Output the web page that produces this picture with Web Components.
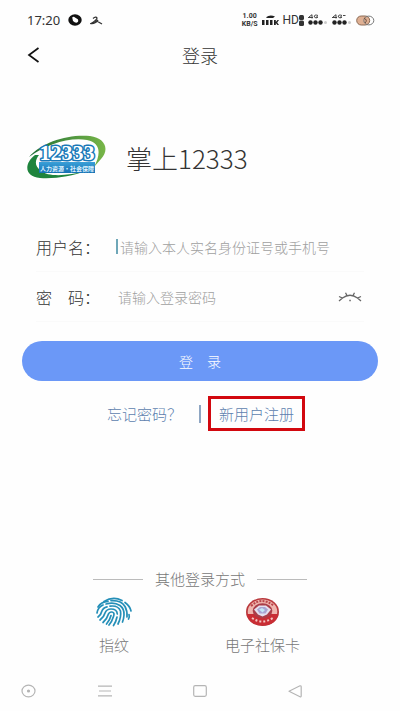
<!DOCTYPE html>
<html lang="zh-CN">
<head>
<meta charset="utf-8">
<meta name="viewport" content="width=device-width, initial-scale=1">
<title>登录</title>
<style>
  body {
    margin: 0;
    background: #fefefe;
    color: #333;
    font-family: "Noto Sans CJK SC", sans-serif;
    font-weight: 300;
  }
</style>
</head>
<body>
<login-page></login-page>

<script>
// Small helper shared by all components
class BaseElement extends HTMLElement {
  constructor() {
    super();
    this.attachShadow({ mode: 'open' });
    this.shadowRoot.innerHTML = this.template();
  }
}

// Phone status bar: clock, notifications, network and battery
class StatusBar extends BaseElement {
  template() {
    return `
      <style>
        :host {
          display: flex;
          align-items: center;
          justify-content: space-between;
          height: 40px;
          padding: 0 25px 0 27px;
          font-family: "Noto Sans", sans-serif;
          font-size: 13px;
          font-weight: 400;
        }
        .group { display: flex; align-items: center; gap: 8px; }
        .network { gap: 4px; }
        .speed {
          display: grid;
          justify-items: center;
          font-family: Roboto, sans-serif;
          font-size: 7px;
          font-weight: 700;
          line-height: 8px;
        }
        .hd { display: flex; align-items: center; font-family: Roboto, sans-serif; font-size: 12px; }
        svg { display: block; }
      </style>
      <div class="group">
        <span>17:20</span>
        <svg width="14" height="12" viewBox="0 0 14 12">
          <ellipse cx="7" cy="6" rx="6.7" ry="5.8" fill="#111"/>
          <path d="M4.2 3.6Q5.5 2.2 7 3.4L9.8 5.3Q11 7.5 9 8.6Q7 9 5 7Z" fill="#fff"/>
        </svg>
        <svg width="13" height="9" viewBox="0 0 13 9" fill="none" stroke="#333" stroke-width="1.3">
          <path d="M3 2.5Q6 0 7 2Q7 4 1 7.5Q5 8 8 4M5 4L12 8"/>
        </svg>
      </div>
      <div class="group network">
        <div class="speed"><span>1.00</span><span>KB/S</span></div>
        <svg width="17" height="11" viewBox="0 0 17 11" fill="#222">
          <path d="M4 2.2Q8 -1 13 1.5L11 3H5ZM0 5h2.5v5H0zM4 5h2.5v5H4zM8 5h2.5v5H8zM12 5h1.8v2L15.5 5H17L15.2 7.4L17 10h-1.6L13.8 8v2H12z"/>
        </svg>
        <span class="hd">HD<svg width="5" height="11" viewBox="0 0 5 11"><rect width="5" height="5" rx="1.5" fill="#333"/><rect y="5.5" width="5" height="5.5" rx="1.5" fill="#333"/></svg></span>
        <svg width="20" height="12" viewBox="0 0 20 12" fill="#222">
          <path d="M1 3L4 .7V4.5M0 3.5H5M10 1.5Q6 0 6.3 3Q8 5 10 3H8" fill="none" stroke="#333" stroke-width=".9"/>
          <circle cx="2.5" cy="8.5" r="2.2"/><circle cx="7.5" cy="8.5" r="2.2"/><circle cx="12.5" cy="8.5" r="2.2"/>
          <circle cx="17.5" cy="8.5" r="1.5" fill="#ccc"/>
        </svg>
        <svg width="20" height="12" viewBox="0 0 20 12" fill="#222">
          <path d="M1 3L4 .7V4.5M0 3.5H5M10 1.5Q6 0 6.3 3Q8 5 10 3H8M11 1.5h2.5" fill="none" stroke="#333" stroke-width=".9"/>
          <circle cx="2.5" cy="8.5" r="2.2"/><circle cx="7.5" cy="8.5" r="2.2"/><circle cx="12.5" cy="8.5" r="2.2"/>
          <circle cx="17.5" cy="8.5" r="1.5" fill="#ccc"/>
        </svg>
        <svg width="19" height="11" viewBox="0 0 19 11">
          <rect x=".7" y="1" width="13" height="9" rx="4.5" fill="#dfb093" stroke="#8a6a55"/>
          <ellipse cx="12.8" cy="5.5" rx="5" ry="4.4" fill="none" stroke="#777"/>
          <path d="M8 3Q12 5 9 8" fill="none" stroke="#6b4b39"/>
        </svg>
      </div>
    `;
  }
}

// Title bar with a back button
class PageHeader extends BaseElement {
  template() {
    return `
      <style>
        :host {
          display: grid;
          grid-template-columns: 1fr auto 1fr;
          align-items: center;
          height: 30px;
          padding: 0 24px;
        }
        button {
          justify-self: start;
          padding: 0 3px;
          border: 0;
          background: none;
          cursor: pointer;
        }
        svg { display: block; }
        h1 { margin: 0; font-size: 18px; font-weight: 300; line-height: 24px; }
      </style>
      <button type="button" aria-label="返回">
        <svg width="13" height="16" viewBox="0 0 13 16" fill="none" stroke="#111" stroke-width="1.7">
          <path d="M11.5 1L2 8L11.5 15"/>
        </svg>
      </button>
      <h1><slot></slot></h1>
    `;
  }
}

// 12333 logo and product name
class BrandMark extends BaseElement {
  template() {
    return `
      <style>
        :host {
          display: flex;
          align-items: center;
          gap: 20px;
          padding: 64px 26px 0;
        }
        svg { display: block; flex: none; }
        .name { font-size: 26px; line-height: 32px; }
      </style>
      <svg width="80" height="48" viewBox="0 0 80 48" role="img" aria-label="12333">
        <defs>
          <linearGradient id="leaf" x1="0" x2="1" y1="0" y2="0">
            <stop offset="0" stop-color="#1c6d35"/>
            <stop offset="1" stop-color="#78b648"/>
          </linearGradient>
          <linearGradient id="plate" x1="0" x2="0" y1="0" y2="1">
            <stop offset="0" stop-color="#3aa0d8"/>
            <stop offset="1" stop-color="#1670b4"/>
          </linearGradient>
        </defs>
        <path d="M3 23C16 8 42 0 64 2C79 4 84 15 75 25L68 33C75 20 75 9 61 6C42 3 20 11 3 23Z" fill="url(#leaf)"/>
        <path d="M9 21C-2 29 -2 43 14 44C30 45 46 42 60 37C42 42 22 43 15 37C8 32 9 26 13 21Z" fill="#1f843d"/>
        <rect x="13" y="28" width="56" height="11" fill="url(#plate)"/>
        <text x="41" y="26" font-size="22" text-anchor="middle" font-family="Liberation Serif, serif" font-weight="700" fill="#fff" stroke="#1878b8" stroke-width="3" paint-order="stroke" stroke-linejoin="round">12333</text>
        <text x="41" y="37" font-size="6" text-anchor="middle" font-weight="700" fill="#dff3ff">人力资源·社会保障</text>
      </svg>
      <span class="name"><slot></slot></span>
    `;
  }
}

// Labelled input row
class FormField extends BaseElement {
  template() {
    return `
      <style>
        :host {
          display: block;
          margin: 0 36px;
          border-bottom: 1px solid #fafafa;
        }
        .row { display: flex; align-items: center; height: 49px; }
        label { flex: none; width: 80px; font-size: 16px; white-space: pre; }
        .caret { flex: none; width: 2px; height: 15px; background: #6fa7b8; display: none; }
        :host([active]) .caret { display: block; }
        input {
          flex: 1;
          min-width: 0;
          padding: 0 0 0 2px;
          border: 0;
          outline: 0;
          background: none;
          font: inherit;
          font-size: 14px;
          line-height: 20px;
          color: #333;
        }
        input::placeholder { color: #a0a0a0; opacity: 1; }
      </style>
      <div class="row">
        <label for="field"></label>
        <span class="caret"></span>
        <input id="field">
        <slot></slot>
      </div>
    `;
  }

  connectedCallback() {
    const input = this.shadowRoot.querySelector('input');
    this.shadowRoot.querySelector('label').textContent = this.getAttribute('label');
    input.type = this.getAttribute('type') || 'text';
    input.placeholder = this.getAttribute('placeholder') || '';
  }
}

// Closed eye toggle for the password field
class EyeToggle extends BaseElement {
  template() {
    return `
      <style>
        :host { display: block; }
        button { display: block; padding: 0 2px; border: 0; background: none; cursor: pointer; }
        svg { display: block; }
      </style>
      <button type="button" aria-label="显示密码">
        <svg width="24" height="10" viewBox="0 0 24 10" fill="none" stroke="#666" stroke-width="1.3">
          <path d="M1 4.500L4.500 6Q12 .5 19.500 6L23 4.500M4.500 6L1 9M9 3.500L7.500 .8M15 3.500L16.500 .8M19.500 6L23 9"/>
          <path d="M11.300 8.500h1.500"/>
        </svg>
      </button>
    `;
  }
}

class SubmitButton extends BaseElement {
  template() {
    return `
      <style>
        :host { display: block; margin: 19px 22px 0; }
        button {
          display: block;
          width: 100%;
          height: 40px;
          border: 0;
          border-radius: 20px;
          background: #6b98f7;
          color: #fff;
          font: inherit;
          font-size: 14px;
          cursor: pointer;
        }
      </style>
      <button type="submit"><slot></slot></button>
    `;
  }
}

// Forgot password / register
class AccountLinks extends BaseElement {
  template() {
    return `
      <style>
        :host {
          display: flex;
          align-items: center;
          justify-content: center;
          gap: 7px;
          padding: 15px 0 0 12px;
          font-size: 15px;
          line-height: 21px;
        }
        a { color: #5d7fae; text-decoration: none; }
        .forgot { padding-right: 10px; }
        .divider { width: 2px; height: 18px; background: #8ea6c3; }
        .register { padding: 4px 8px; border: 3px solid #d2080f; }
      </style>
      <a class="forgot" href="#forgot">忘记密码？</a>
      <span class="divider"></span>
      <a class="register" href="#register">新用户注册</a>
    `;
  }
}

// Alternative sign-in methods
class OtherLogin extends BaseElement {
  template() {
    return `
      <style>
        :host {
          display: block;
          width: 214px;
          margin: auto auto 0;
          padding: 24px 0 16px;
          color: #777;
          font-size: 15px;
          line-height: 20px;
        }
        .title { display: flex; align-items: center; justify-content: space-between; gap: 12px; }
        .title::before, .title::after { content: ""; flex: 1; height: 1px; background: #bbb; }
        h2 { margin: 0; font: inherit; }
        .methods { display: flex; justify-content: space-between; padding: 8px 7px 0 3px; }
      </style>
      <div class="title"><h2>其他登录方式</h2></div>
      <div class="methods"><slot></slot></div>
    `;
  }
}

class LoginMethod extends BaseElement {
  template() {
    return `
      <style>
        :host { display: block; }
        button {
          display: flex;
          flex-direction: column;
          align-items: center;
          gap: 8px;
          padding: 0;
          border: 0;
          background: none;
          color: inherit;
          font: inherit;
          cursor: pointer;
        }
      </style>
      <button type="button"><slot name="icon"></slot><span><slot></slot></span></button>
    `;
  }
}

// System navigation bar
class NavBar extends BaseElement {
  template() {
    return `
      <style>
        :host {
          display: grid;
          grid-template-columns: 36fr 76fr 95fr 95fr 98fr;
          align-items: center;
          height: 40px;
        }
        button { justify-self: end; padding: 0; border: 0; background: none; }
        svg { display: block; }
      </style>
      <button type="button" aria-label="辅助">
        <svg width="15" height="14" viewBox="0 0 15 14" fill="none" stroke="#b5b5b5" stroke-width="1.2"><ellipse cx="7.5" cy="7" rx="6.5" ry="5.8"/><circle cx="7.5" cy="7" r="1" fill="#aaa"/></svg>
      </button>
      <button type="button" aria-label="菜单">
        <svg width="14" height="12" viewBox="0 0 14 12" stroke="#b5b5b5" stroke-width="1.2"><path d="M0 1.2h14M1 6h12M0 10.8h14"/></svg>
      </button>
      <button type="button" aria-label="主页">
        <svg width="14" height="12" viewBox="0 0 14 12" fill="none" stroke="#b5b5b5" stroke-width="1.2"><rect x=".7" y=".7" width="12.6" height="10.6" rx="1.5"/></svg>
      </button>
      <button type="button" aria-label="返回">
        <svg width="14" height="13" viewBox="0 0 14 13" fill="none" stroke="#b5b5b5" stroke-width="1.2" stroke-linejoin="round"><path d="M1 6.2L12 .8Q13.2.6 13.2 2V11Q13.2 12.2 12 11.7Z"/></svg>
      </button>
    `;
  }
}

class LoginPage extends BaseElement {
  template() {
    return `
      <style>
        :host { display: flex; flex-direction: column; min-height: 100vh; }
        form { margin: 40px 0 0; }
        svg { display: block; }
      </style>
      <status-bar></status-bar>
      <page-header>登录</page-header>
      <brand-mark>掌上12333</brand-mark>
      <form>
        <form-field active label="用户名：" placeholder="请输入本人实名身份证号或手机号"></form-field>
        <form-field type="password" label="密　码：" placeholder="请输入登录密码"><eye-toggle></eye-toggle></form-field>
        <submit-button>登　录</submit-button>
      </form>
      <account-links></account-links>
      <other-login>
        <login-method>
          <svg slot="icon" width="36" height="30" viewBox="0 0 36 30" fill="none" stroke="#258fb8" stroke-width="1.7" stroke-linecap="round">
            <path d="M8 4.5Q17 -1 26 3.5M29 5.5Q34 9 35 14"/>
            <path d="M2 10Q5 4.500 12 4.300M15 3.700Q25 3 29 9.500Q31.500 14 31 20"/>
            <path d="M1 16Q2 10 7 8M10 7Q18 4.500 24 8.500Q28.500 12 28 18Q27.700 22 26.500 25"/>
            <path d="M2 20Q5 18 5.500 15Q7 10.500 11 9.800M14 9.200Q22 8 24.500 14Q25.500 20 22 27"/>
            <path d="M4 23Q8 20 9 16Q10.500 12 15 12Q21 12 21.300 17M21 20Q20 25 17.500 28.500"/>
            <path d="M7 25.500Q11 22 12 18Q13 14.800 16 15Q19 15.500 17.500 19.500Q16 24.500 13 28"/>
            <path d="M10.500 27Q14 23 15 18.500M33 17.500Q33.800 20 32.500 22"/>
          </svg>指纹</login-method>
        <login-method>
          <svg slot="icon" width="35" height="30" viewBox="0 0 35 30">
            <ellipse cx="17.500" cy="15" rx="16.500" ry="14" fill="#b9383c"/>
            <ellipse cx="17.500" cy="14.800" rx="14.800" ry="12.300" fill="#efb5ae"/>
            <path d="M1.800 17H33.200Q31 28.200 17.500 28.500Q4 28.200 1.800 17Z" fill="#c92d34"/>
            <path d="M6 9Q17 -1 29 9" fill="none" stroke="#b9454a" stroke-width="2" stroke-dasharray="2 1.200"/>
            <ellipse cx="17.500" cy="13.800" rx="9.800" ry="7.500" fill="#aa3d48"/>
            <path d="M9 12.500L14 8.500H21L26 12.500L22 17.500L17.500 19.500L13 17.500Z" fill="#e4e0ee"/>
            <path d="M12 12.500L15 10H20L23 12.500L20.500 16.500H14.500Z" fill="#a9a4d2"/>
            <path d="M14 12.500L17 11L20 13L17.500 15.500Z" fill="#c3e6f5"/>
            <path d="M7 21Q17 28 28 21" fill="none" stroke="#f5c7c3" stroke-width="2" stroke-dasharray="2 2"/>
          </svg>电子社保卡</login-method>
      </other-login>
      <nav-bar></nav-bar>
    `;
  }
}

customElements.define('status-bar', StatusBar);
customElements.define('page-header', PageHeader);
customElements.define('brand-mark', BrandMark);
customElements.define('form-field', FormField);
customElements.define('eye-toggle', EyeToggle);
customElements.define('submit-button', SubmitButton);
customElements.define('account-links', AccountLinks);
customElements.define('other-login', OtherLogin);
customElements.define('login-method', LoginMethod);
customElements.define('nav-bar', NavBar);
customElements.define('login-page', LoginPage);
</script>
</body>
</html>
